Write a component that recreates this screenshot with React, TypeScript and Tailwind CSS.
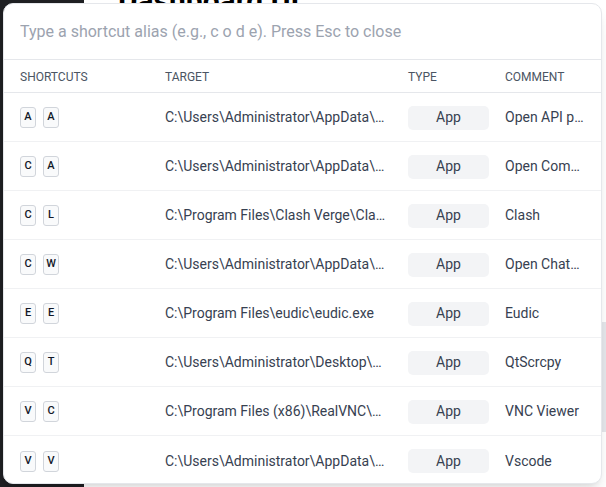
import React from 'react';

type Row = { keys: string[]; target: string; type: string; comment: string };

const rows: Row[] = [
  { keys: ['A', 'A'], target: 'C:\\Users\\Administrator\\AppData\\Local\\Programs\\apifox\\Apifox.exe', type: 'App', comment: 'Open API platform' },
  { keys: ['C', 'A'], target: 'C:\\Users\\Administrator\\AppData\\Local\\Programs\\commander\\Commander.exe', type: 'App', comment: 'Open Commander' },
  { keys: ['C', 'L'], target: 'C:\\Program Files\\Clash Verge\\Clash Verge.exe', type: 'App', comment: 'Clash' },
  { keys: ['C', 'W'], target: 'C:\\Users\\Administrator\\AppData\\Local\\ChatWise\\ChatWise.exe', type: 'App', comment: 'Open ChatWise' },
  { keys: ['E', 'E'], target: 'C:\\Program Files\\eudic\\eudic.exe', type: 'App', comment: 'Eudic' },
  { keys: ['Q', 'T'], target: 'C:\\Users\\Administrator\\Desktop\\main\\QtScrcpy.exe', type: 'App', comment: 'QtScrcpy' },
  { keys: ['V', 'C'], target: 'C:\\Program Files (x86)\\RealVNC\\VNC Viewer\\vncviewer.exe', type: 'App', comment: 'VNC Viewer' },
  { keys: ['V', 'V'], target: 'C:\\Users\\Administrator\\AppData\\Local\\Programs\\Microsoft VS Code\\Code.exe', type: 'App', comment: 'Vscode' },
];

const cols = 'grid grid-cols-[145px_243px_97px_114px]';

const App: React.FC = () => {
  return (
    <div className="relative w-[606px] h-[487px] overflow-hidden bg-white" style={{ fontFamily: 'Roboto, "Noto Sans", sans-serif' }}>
      {/* page behind the palette */}
      <div className="absolute inset-y-0 left-0 w-[84px] bg-[#1e1f22]" />
      <div className="absolute top-[-22px] left-[118px] text-[30px] font-bold text-black">Dashboard UI</div>
      <div className="absolute top-[322px] right-0 w-[8px] h-[110px] bg-[#e5e7eb]" />

      <div className="absolute left-[3px] top-[3px] w-[599px] h-[481px] bg-white rounded-[10px] border border-[#e5e7eb] shadow-lg overflow-hidden">
        <div className="h-[56px] flex items-center px-4 border-b border-[#e5e7eb]">
          <input
            className="w-full outline-none text-[16px] text-[#374151] placeholder:text-[#9ca3af] bg-transparent"
            placeholder="Type a shortcut alias (e.g., c o d e). Press Esc to close"
          />
        </div>
        <div className={`${cols} h-[33px] pt-px items-center border-b border-[#e5e7eb] text-[12px] uppercase text-[#4b5563]`}>
          <div className="px-4">Shortcuts</div>
          <div className="px-4">Target</div>
          <div className="px-4">Type</div>
          <div className="px-4">Comment</div>
        </div>
        {rows.map((r, i) => (
          <div key={i} className={`${cols} h-[49px] pt-px items-center ${i < rows.length - 1 ? 'border-b border-[#f0f1f3]' : ''}`}>
            <div className="px-4 flex gap-[7px]">
              {r.keys.map((k, j) => (
                <span key={j} className="w-[16px] h-[21px] flex items-center justify-center rounded-[3px] border border-[#d1d5db] bg-[#f9fafb] text-[11px] font-medium text-[#111827]">
                  {k}
                </span>
              ))}
            </div>
            <div className="pl-4 pr-[6px] truncate text-[14px] text-[#374151]">{r.target}</div>
            <div className="px-4">
              <div className="w-[81px] h-[24px] flex items-center justify-center rounded-[5px] bg-[#f3f4f6] text-[14px] text-[#374151]">{r.type}</div>
            </div>
            <div className="pl-4 pr-4 truncate text-[14px] text-[#374151]">{r.comment}</div>
          </div>
        ))}
      </div>
    </div>
  );
};

export default App;
